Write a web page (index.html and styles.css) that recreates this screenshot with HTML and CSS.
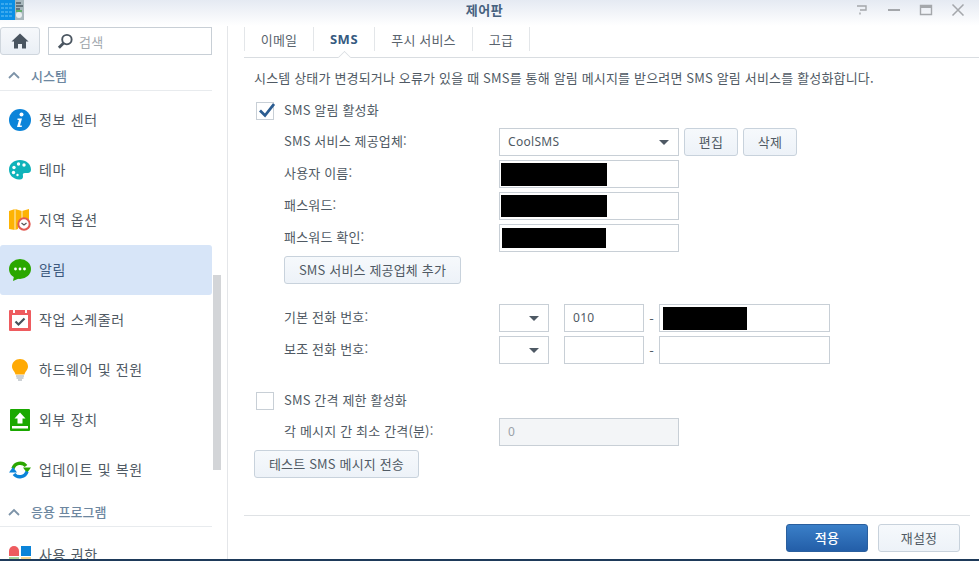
FILE: index.html
```html
<!DOCTYPE html>
<html lang="ko">
<head>
<meta charset="utf-8">
<title>제어판</title>
<link rel="stylesheet" href="styles.css">
</head>
<body>
<div class="window">
  <header class="titlebar">
    <svg class="app-icon" viewBox="0 0 24 20" width="24" height="20">
      <rect width="15" height="20" fill="#0a8fe6"/>
      <path d="M1 4h12M1 8h12M1 12h12M1 16h12" stroke="#6cc4f5" stroke-width="1" stroke-dasharray="3 1"/>
      <rect x="15" width="9" height="20" fill="#a9b8bd"/>
      <path d="M16 3h5M16 6h7M16 9h4" stroke="#26323c" stroke-width="1.2"/>
      <path d="M16 11h6" stroke="#35a532" stroke-width="1.2"/>
      <circle cx="19" cy="15" r="3" fill="#e8eef0"/>
    </svg>
    <div class="title">제어판</div>
    <div class="win-buttons">
      <svg viewBox="0 0 14 12" width="14" height="12"><path d="M2 2h9v4H5M5 8.500v2" fill="none" stroke="#a4a7ab" stroke-width="1.400"/></svg>
      <svg viewBox="0 0 14 12" width="14" height="12"><path d="M1 6h12" stroke="#a4a7ab" stroke-width="2"/></svg>
      <svg viewBox="0 0 14 12" width="14" height="12"><path d="M1.500 1.500h11v9h-11z" fill="none" stroke="#a4a7ab" stroke-width="1.400"/><path d="M1 3h12" stroke="#a4a7ab" stroke-width="2"/></svg>
      <svg viewBox="0 0 14 12" width="14" height="12"><path d="M1.500 .5l11 11M12.500 .5l-11 11" stroke="#a4a7ab" stroke-width="1.500"/></svg>
    </div>
  </header>

  <div class="content">
    <aside class="sidebar">
      <div class="scrollbar"></div>
      <div class="side-top">
        <button class="home-btn" aria-label="홈">
          <svg viewBox="0 0 18 16" width="18" height="16"><path d="M9 .5L.5 8.500h2.500V15.500h4v-4.500h4v4.500h4V8.500h2.500z" fill="#4a5560"/></svg>
        </button>
        <div class="search">
          <svg viewBox="0 0 18 18" width="17" height="17"><circle cx="10.500" cy="7" r="5" fill="none" stroke="#4a5560" stroke-width="2"/><path d="M7 10.500L2 15.500" stroke="#4a5560" stroke-width="3"/></svg>
          <span>검색</span>
        </div>
      </div>

      <div class="section">
        <svg viewBox="0 0 12 8" width="12" height="8"><path d="M1 7l5-5 5 5" fill="none" stroke="#7d93a8" stroke-width="1.800"/></svg>
        <span>시스템</span>
      </div>
      <div class="item">
        <svg viewBox="0 0 22 22" width="22" height="22"><circle cx="11" cy="11" r="11" fill="#0b84d9"/><circle cx="12.500" cy="5.500" r="2" fill="#fff"/><path d="M8.500 9.500h4.500l-2 7h1.800v1.500H8l2-7H8.500z" fill="#fff"/></svg>
        <span>정보 센터</span>
      </div>
      <div class="item">
        <svg viewBox="0 0 22 22" width="22" height="22"><path d="M11 1c6 0 11 4 11 9.500 0 4-3.500 3.500-6 3.500-2 0-2.500 1-2 3 .4 2-1 4-4 3.500C4 20 0 16 0 10.500 0 5 5 1 11 1z" fill="#10b3ba"/><circle cx="5" cy="8.500" r="1.700" fill="#fff"/><circle cx="9.500" cy="5" r="1.700" fill="#fff"/><circle cx="15" cy="6" r="1.700" fill="#fff"/><circle cx="4.500" cy="13.500" r="1.700" fill="#fff"/><circle cx="8.500" cy="16" r="1.200" fill="#fff"/></svg>
        <span>테마</span>
      </div>
      <div class="item">
        <svg viewBox="0 0 22 22" width="22" height="22"><path d="M0 2l6-2 7 2 7-2v12H0z M0 12h9v8l-3 1-6-1z" fill="#fdb304"/><path d="M6 0v21M13 2v9" stroke="#fff" stroke-width=".8"/><circle cx="15" cy="15" r="5.700" fill="#fff" stroke="#e25a52" stroke-width="2"/><path d="M12.500 14l2.500 2 2.500-2" fill="none" stroke="#555" stroke-width="1.200"/></svg>
        <span>지역 옵션</span>
      </div>
      <div class="item active">
        <svg viewBox="0 0 22 22" width="22" height="22"><ellipse cx="11" cy="10" rx="11" ry="10" fill="#2ba700"/><path d="M5 17l-1 5 7-3z" fill="#2ba700"/><circle cx="6.500" cy="10" r="1.400" fill="#fff"/><circle cx="11" cy="10" r="1.400" fill="#fff"/><circle cx="15.500" cy="10" r="1.400" fill="#fff"/></svg>
        <span>알림</span>
      </div>
      <div class="item">
        <svg viewBox="0 0 22 22" width="22" height="22"><rect y="1" width="22" height="21" rx="1" fill="#ee5b5f"/><rect x="3" y="6" width="16" height="13" fill="#fff"/><rect x="4" y="0" width="2" height="4" fill="#fff"/><rect x="16" y="0" width="2" height="4" fill="#fff"/><path d="M6.500 12.500l3 3 6-6" fill="none" stroke="#47515b" stroke-width="2.200"/></svg>
        <span>작업 스케줄러</span>
      </div>
      <div class="item">
        <svg viewBox="0 0 22 22" width="22" height="22"><path d="M11 0c4.500 0 8 3.200 8 7.500 0 3.500-3 5-3.500 8h-9C6 12.500 3 11 3 7.500 3 3.200 6.500 0 11 0z" fill="#ffaa05"/><path d="M7 17h8M7.500 19h7M9 21h4" stroke="#9aa3ab" stroke-width="1.200"/></svg>
        <span>하드웨어 및 전원</span>
      </div>
      <div class="item">
        <svg viewBox="0 0 22 22" width="22" height="22"><rect x="1" y="0" width="20" height="22" rx="1" fill="#1aa800"/><path d="M11 3.500l5.500 6H13.500v5h-5v-5H5.500z" fill="#fff"/><rect x="3" y="17" width="16" height="2.500" fill="#fff"/></svg>
        <span>외부 장치</span>
      </div>
      <div class="item">
        <svg viewBox="0 0 22 22" width="22" height="22"><path d="M4 9.500A7.500 7.500 0 0 1 17 7" fill="none" stroke="#2ba700" stroke-width="3.400"/><path d="M14 8.500h8l-4 5.500z" fill="#2ba700"/><path d="M18 12.500A7.500 7.500 0 0 1 5 15" fill="none" stroke="#0b84d9" stroke-width="3.400"/><path d="M0 13.500h8L4 8z" fill="#0b84d9"/></svg>
        <span>업데이트 및 복원</span>
      </div>
      <div class="section section-apps">
        <svg viewBox="0 0 12 8" width="12" height="8"><path d="M1 7l5-5 5 5" fill="none" stroke="#7d93a8" stroke-width="1.800"/></svg>
        <span>응용 프로그램</span>
      </div>
      <div class="item">
        <svg viewBox="0 0 22 22" width="22" height="22"><path d="M0 7a5 5 0 0 1 10 0v5H0z" fill="#ee5b5f"/><rect x="12" y="2" width="10" height="10" fill="#0b84d9"/><rect y="13" width="10" height="9" fill="#a9d69b"/><rect x="12" y="13" width="10" height="9" fill="#f5d58c"/></svg>
        <span>사용 권한</span>
      </div>
    </aside>

    <main class="main">
      <nav class="tabs">
        <div class="tab tab-email">이메일</div>
        <div class="tab tab-sms current">SMS</div>
        <div class="tab tab-push">푸시 서비스</div>
        <div class="tab tab-adv">고급</div>
      </nav>

      <div class="panel">
        <p class="desc">시스템 상태가 변경되거나 오류가 있을 때 SMS를 통해 알림 메시지를 받으려면 SMS 알림 서비스를 활성화합니다.</p>

        <div class="check-row">
          <span class="checkbox">
            <svg viewBox="0 0 18 18" width="18" height="18"><path d="M3 8.500l5 5L17 2" fill="none" stroke="#2b5c91" stroke-width="2.800"/></svg>
          </span>
          <span class="check-label">SMS 알림 활성화</span>
        </div>

        <div class="form first">
          <div class="row">
            <label>SMS 서비스 제공업체:</label>
            <div class="field wide select"><span>CoolSMS</span><i class="caret"></i></div>
            <button class="btn small">편집</button>
            <button class="btn small">삭제</button>
          </div>
          <div class="row">
            <label>사용자 이름:</label>
            <div class="field wide"><b class="mask m1"></b></div>
          </div>
          <div class="row">
            <label>패스워드:</label>
            <div class="field wide"><b class="mask m2"></b></div>
          </div>
          <div class="row">
            <label>패스워드 확인:</label>
            <div class="field wide"><b class="mask m3"></b></div>
          </div>
          <div class="row">
            <button class="btn add">SMS 서비스 제공업체 추가</button>
          </div>
        </div>

        <div class="form phones">
          <div class="row">
            <label>기본 전화 번호:</label>
            <div class="field code select"><i class="caret"></i></div>
            <div class="field prefix"><span>010</span></div>
            <span class="dash">-</span>
            <div class="field number"><b class="mask m4"></b></div>
          </div>
          <div class="row">
            <label>보조 전화 번호:</label>
            <div class="field code select"><i class="caret"></i></div>
            <div class="field prefix"></div>
            <span class="dash">-</span>
            <div class="field number"></div>
          </div>
        </div>

        <div class="check-row limit">
          <span class="checkbox"></span>
          <span class="check-label">SMS 간격 제한 활성화</span>
        </div>

        <div class="form interval">
          <div class="row">
            <label>각 메시지 간 최소 간격(분):</label>
            <div class="field wide disabled"><span>0</span></div>
          </div>
        </div>

        <button class="btn test">테스트 SMS 메시지 전송</button>
      </div>

      <footer class="footer">
        <button class="btn primary">적용</button>
        <button class="btn reset">재설정</button>
      </footer>
    </main>
  </div>
  <div class="bottom-strip"></div>
</div>
</body>
</html>
```

FILE: styles.css
```css
* { box-sizing: border-box; }
html, body { margin: 0; padding: 0; height: 100%; overflow: hidden; background: #fff; }
body {
  font-family: "Noto Sans CJK KR", "Noto Sans", sans-serif;
  font-size: 13px;
  letter-spacing: .17px;
  color: #505a64;
}
.window { width: 979px; height: 561px; display: flex; flex-direction: column; overflow: hidden; }

.titlebar {
  height: 26px;
  flex: none;
  display: flex;
  align-items: flex-start;
  background: linear-gradient(#e5eaf2, #ffffff);
  position: relative;
}
.app-icon { display: block; }
.title {
  position: absolute;
  left: 0; right: 10px; top: 0;
  text-align: center;
  font-size: 13px;
  line-height: 19px;
  letter-spacing: .5px;
  font-weight: 700;
  color: #47627f;
}
.win-buttons { margin-left: auto; display: flex; gap: 18px; padding: 4px 14px 0 0; }

.content { flex: 1; min-height: 0; display: flex; }

.sidebar {
  width: 228px;
  flex: none;
  border-right: 1px solid #e4e6e9;
  padding-right: 15px;
  position: relative;
  overflow: hidden;
}
.scrollbar {
  position: absolute;
  left: 213px; top: 249px;
  width: 8px; height: 195px;
  background: #d3d5d8;
}
.side-top { display: flex; gap: 8px; height: 28px; margin-top: 1px; }
.home-btn {
  width: 40px; height: 28px; padding: 0;
  display: flex; align-items: center; justify-content: center;
  border: 1px solid #cfd6dd;
  border-radius: 3px;
  background: linear-gradient(#f6f8fb, #eaeff5);
}
.search {
  flex: 1;
  display: flex; align-items: center; gap: 5px;
  padding-left: 8px;
  border: 1px solid #c8cfd6;
  background: #fff;
  color: #a3a9af;
}
.section {
  height: 36px;
  margin-bottom: 4px;
  display: flex; align-items: center; gap: 11px;
  padding: 5px 0 0 8px;
  border-bottom: 1px solid #e8ebee;
  color: #6d87a0;
  font-size: 13px;
  letter-spacing: 0;
  font-weight: 500;
}
.section svg { flex: none; }
.section-apps { height: 32px; margin-bottom: 3px; padding-top: 2px; }
.item {
  height: 50px;
  display: flex; align-items: center; gap: 8px;
  padding-left: 9px;
  font-size: 14px;
  letter-spacing: .65px;
  color: #505a64;
  border-radius: 3px;
}
.item span { padding-bottom: 2px; }
.item svg { flex: none; }
.item.active { background: #d7e5f8; color: #3d5a7e; }

.main { flex: 1; min-width: 0; display: flex; flex-direction: column; padding-left: 16px; }

.tabs { display: flex; height: 32px; flex: none; border-bottom: 1px solid #d9dde1; }
.tab {
  height: 24px;
  margin-top: 1px;
  border-left: 1px solid #e3e6e9;
  display: flex; align-items: center; justify-content: center;
  color: #5a646e;
}
.tab-email { width: 69px; }
.tab-sms { width: 61px; }
.tab-push { width: 98px; }
.tab-adv { width: 58px; border-right: 1px solid #e3e6e9; }
.tab.current {
  position: relative;
  font-weight: 700;
  font-size: 13px;
  letter-spacing: .5px;
  color: #355a80;
  font-family: "Noto Sans", sans-serif;
}
.tab.current::after {
  content: "";
  position: absolute;
  left: 25px; top: 25px;
  width: 10px; height: 10px;
  background: #fff;
  border-left: 1px solid #d9dde1;
  border-top: 1px solid #d9dde1;
  transform: rotate(45deg) scale(.85);
}

.panel { flex: 1; min-height: 0; padding-left: 10px; }
.desc {
  margin: 10px 0 0;
  line-height: 20px;
  white-space: nowrap;
}
.check-row { display: flex; align-items: center; gap: 10px; margin: 14px 0 0 2px; height: 18px; }
.check-label { padding-bottom: 4px; }
.checkbox { width: 18px; height: 18px; flex: none; border: 1px solid #c8cfd6; background: #fff; position: relative; }
.checkbox svg { position: absolute; left: 0; top: -1px; }

.form { padding-left: 30px; display: flex; flex-direction: column; gap: 4px; }
.form.first { margin-top: 8px; }
.form.phones { margin-top: 20px; }
.form.interval { margin-top: 8px; }
.check-row.limit { margin-top: 28px; }
.row { display: flex; align-items: center; height: 28px; }
.row label { width: 215px; flex: none; padding-bottom: 4px; }

.field {
  height: 28px;
  border: 1px solid #c8cfd6;
  background: #fff;
  display: flex; align-items: center;
  padding: 0 0 1px 8px;
  font-family: "Noto Sans", sans-serif;
  font-size: 12px;
  letter-spacing: .3px;
}
.field.wide { width: 180px; }
.field.select { justify-content: space-between; padding-right: 9px; padding-bottom: 0; }
.field.select span { padding-bottom: 2px; }
.field.code { width: 50px; justify-content: flex-end; }
.field.prefix { width: 80px; margin-left: 15px; }
.field.number { width: 171px; padding-left: 3px; padding-bottom: 0; }
.field.disabled { background: #f3f5f7; color: #9aa1a8; }
.dash { width: 15px; text-align: center; }
.caret { width: 0; height: 0; border: 5px solid transparent; border-top: 5px solid #4e5964; border-bottom: 0; }
.mask { display: block; background: #000; }
.field.wide:has(.mask) { padding: 0 0 0 1px; }
.m1 { width: 106px; height: 23px; }
.m2 { width: 106px; height: 22px; }
.m3 { width: 104px; height: 20px; margin-left: 1px; }
.m4 { width: 84px; height: 23px; }

.btn {
  font: inherit;
  color: #505a64;
  height: 28px;
  border: 1px solid #c8d2dc;
  border-radius: 3px;
  background: linear-gradient(#f6f9fc, #edf2f8);
  letter-spacing: inherit;
  padding: 0 0 1px;
}
.btn.small { width: 54px; margin-left: 5px; }
.btn.add { width: 177px; }
.btn.test { width: 165px; margin-top: 4px; display: block; }

.footer {
  flex: none;
  width: 726px;
  height: 44px;
  border-top: 1px solid #dfe2e5;
  display: flex; justify-content: flex-end; gap: 10px;
  padding: 8px 10px 0 0;
}
.footer .btn { width: 82px; }
.btn.primary {
  background: linear-gradient(#3a7fc8, #235ea8);
  border-color: #2a5f9e;
  color: #fff;
  font-weight: 500;
}
.bottom-strip { height: 2px; flex: none; background: #1e3a5a; }
```
